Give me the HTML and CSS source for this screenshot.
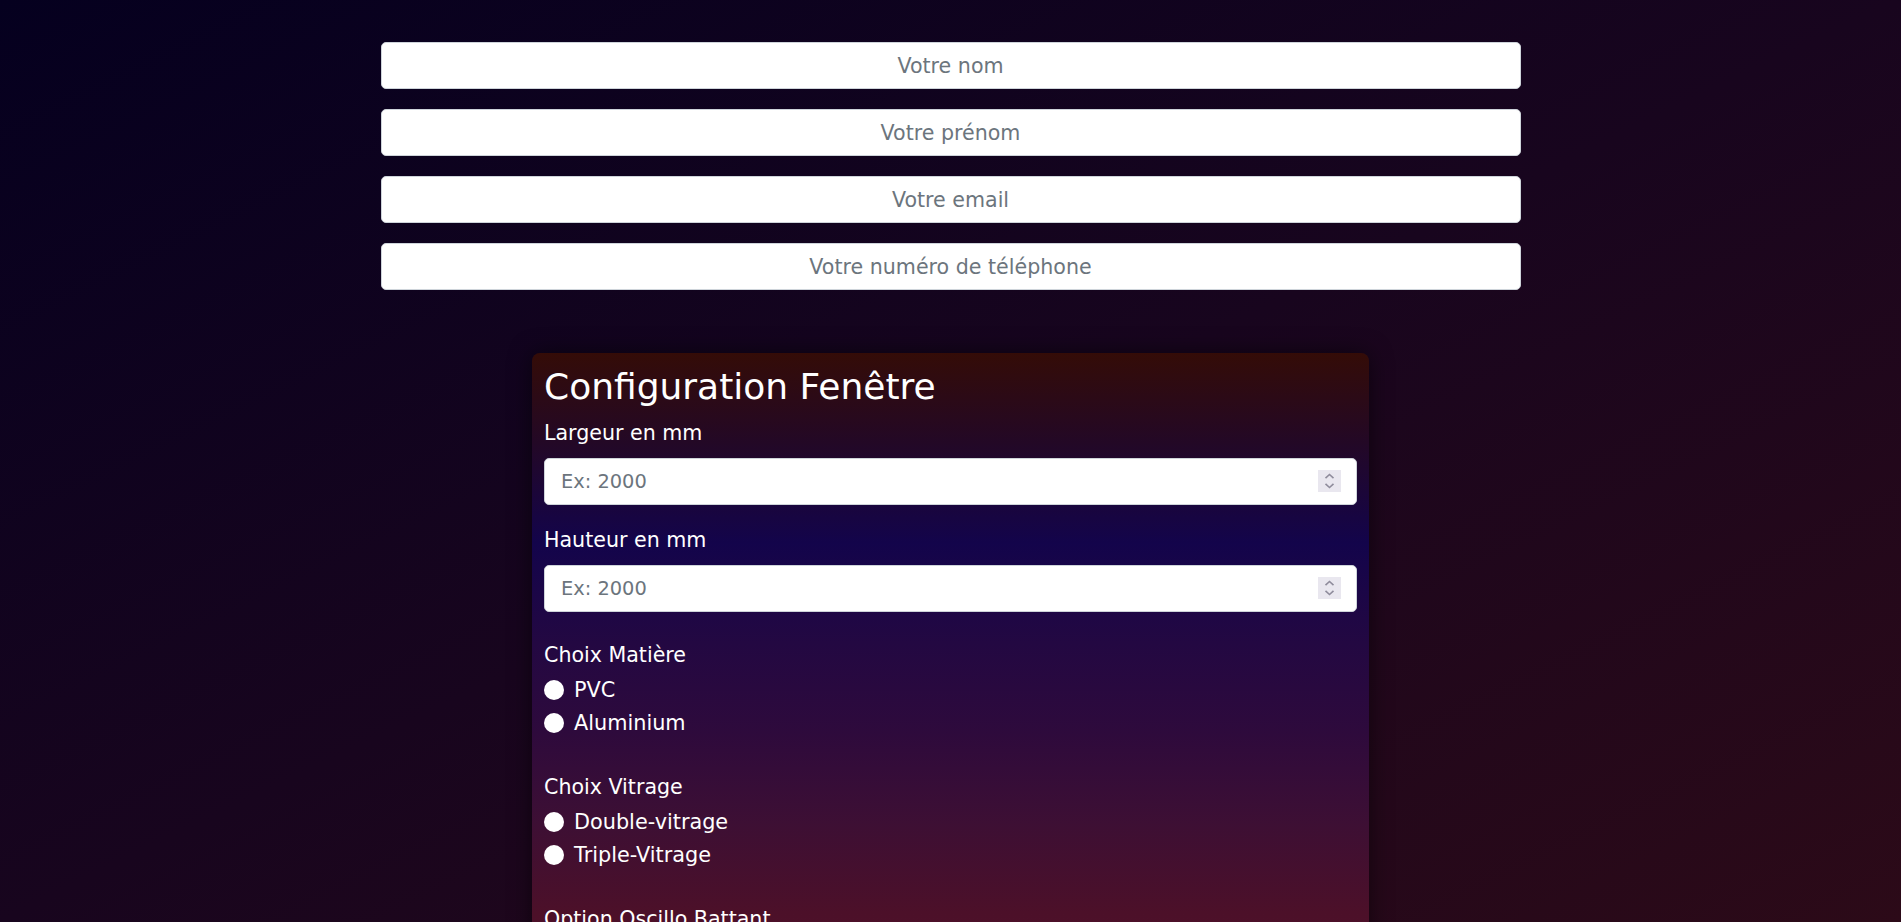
FILE: index.html
```html
<!DOCTYPE html>
<html lang="fr">
<head>
<meta charset="utf-8">
<title>Configuration Fenêtre</title>
<link rel="stylesheet" href="styles.css">
</head>
<body>
<form class="contact">
  <input class="contact-input" type="text" placeholder="Votre nom">
  <input class="contact-input" type="text" placeholder="Votre prénom">
  <input class="contact-input" type="email" placeholder="Votre email">
  <input class="contact-input" type="tel" placeholder="Votre numéro de téléphone">
</form>

<section class="card">
  <h1 class="card-title">Configuration Fenêtre</h1>

  <div class="field">
    <label class="field-label" for="largeur">Largeur en mm</label>
    <div class="number-wrap">
      <input class="number-input" id="largeur" type="text" placeholder="Ex: 2000">
      <span class="spinner"><svg viewBox="0 0 23 22" width="23" height="22"><path d="M7.5 8.2 L11.5 4.5 L15.5 8.2" fill="none" stroke="#8f8c9c" stroke-width="1.6"/><path d="M7.5 13.8 L11.5 17.5 L15.5 13.8" fill="none" stroke="#8f8c9c" stroke-width="1.6"/></svg></span>
    </div>
  </div>

  <div class="field">
    <label class="field-label" for="hauteur">Hauteur en mm</label>
    <div class="number-wrap">
      <input class="number-input" id="hauteur" type="text" placeholder="Ex: 2000">
      <span class="spinner"><svg viewBox="0 0 23 22" width="23" height="22"><path d="M7.5 8.2 L11.5 4.5 L15.5 8.2" fill="none" stroke="#8f8c9c" stroke-width="1.6"/><path d="M7.5 13.8 L11.5 17.5 L15.5 13.8" fill="none" stroke="#8f8c9c" stroke-width="1.6"/></svg></span>
    </div>
  </div>

  <div class="choice first-choice">
    <div class="field-label">Choix Matière</div>
    <label class="radio-row"><span class="radio"></span>PVC</label>
    <label class="radio-row"><span class="radio"></span>Aluminium</label>
  </div>

  <div class="choice">
    <div class="field-label">Choix Vitrage</div>
    <label class="radio-row"><span class="radio"></span>Double-vitrage</label>
    <label class="radio-row"><span class="radio"></span>Triple-Vitrage</label>
  </div>

  <div class="choice">
    <div class="field-label">Option Oscillo Battant</div>
    <label class="radio-row"><span class="radio"></span>Oui</label>
    <label class="radio-row"><span class="radio"></span>Non</label>
  </div>
</section>
</body>
</html>
```

FILE: styles.css
```css
html::-webkit-scrollbar { width: 0; height: 0; }

body {
  margin: 0;
  min-height: 100vh;
  font-family: "DejaVu Sans", "Liberation Sans", sans-serif;
  color: #ffffff;
  background: linear-gradient(to bottom right, #05001f 0%, #18051e 50%, #2c0a18 100%);
  background-attachment: fixed;
  padding-bottom: 80px;
}

.contact {
  width: 1140px;
  margin: 0 auto;
  padding-top: 42px;
  display: flex;
  flex-direction: column;
  gap: 20px;
}

.contact-input {
  box-sizing: border-box;
  height: 47px;
  width: 100%;
  margin: 0;
  padding: 0 12px;
  border: 1px solid #ced4da;
  border-radius: 5px;
  background: #ffffff;
  font-family: "DejaVu Sans", "Liberation Sans", sans-serif;
  font-size: 20.6px;
  text-align: center;
  color: #212529;
  outline: none;
}

.contact-input::placeholder,
.number-input::placeholder { color: #6c757d; opacity: 1; }

.card {
  box-sizing: border-box;
  width: 837px;
  margin: 63px auto 0;
  padding: 12px 12px 40px;
  border-radius: 8px;
  background: linear-gradient(to bottom, #340c07 0px, #230826 90px, #13044b 190px, #230842 290px, #2e0a3c 380px, #3d0f34 470px, #4c1029 560px, #56122a 700px);
  box-shadow: 0 0 22px rgba(0, 0, 0, 0.55);
}

.card-title {
  margin: 0 0 10px;
  font-size: 36px;
  font-weight: 400;
  line-height: 43px;
}

.field { margin-bottom: 20px; }

.field-label {
  display: block;
  font-size: 20.6px;
  line-height: 30px;
  margin-bottom: 10px;
}

.number-wrap { position: relative; }

.number-input {
  box-sizing: border-box;
  width: 100%;
  height: 47px;
  margin: 0;
  padding: 0 50px 0 16px;
  border: 1px solid #ced4da;
  border-radius: 5px;
  background: #ffffff;
  font-family: "DejaVu Sans", "Liberation Sans", sans-serif;
  font-size: 19.4px;
  color: #212529;
  outline: none;
}

.spinner {
  position: absolute;
  right: 16px;
  top: 12px;
  width: 23px;
  height: 22px;
  background: #e9e7ef;
  display: block;
}

.spinner svg { display: block; }

.choice { margin-top: 33px; }
.first-choice { margin-top: 28px; }

.choice .field-label { margin-bottom: 3px; }

.radio-row {
  display: flex;
  align-items: center;
  gap: 10px;
  height: 33px;
  font-size: 20.8px;
}

.radio {
  flex: none;
  width: 20px;
  height: 20px;
  border-radius: 50%;
  background: #ffffff;
}
```
